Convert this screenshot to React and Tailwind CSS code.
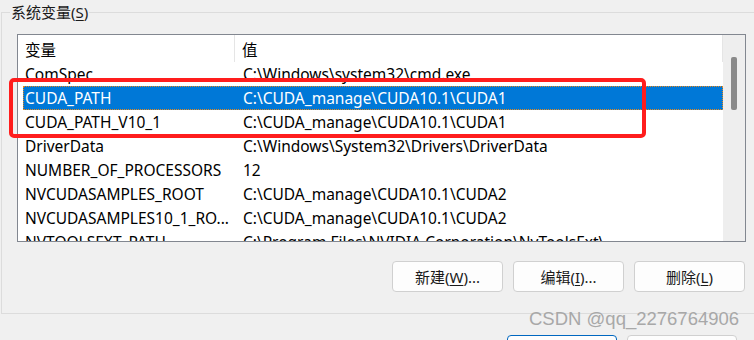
const rows = [
  ["ComSpec", "C:\\Windows\\system32\\cmd.exe"],
  ["CUDA_PATH", "C:\\CUDA_manage\\CUDA10.1\\CUDA1"],
  ["CUDA_PATH_V10_1", "C:\\CUDA_manage\\CUDA10.1\\CUDA1"],
  ["DriverData", "C:\\Windows\\System32\\Drivers\\DriverData"],
  ["NUMBER_OF_PROCESSORS", "12"],
  ["NVCUDASAMPLES_ROOT", "C:\\CUDA_manage\\CUDA10.1\\CUDA2"],
  ["NVCUDASAMPLES10_1_RO...", "C:\\CUDA_manage\\CUDA10.1\\CUDA2"],
  ["NVTOOLSEXT_PATH", "C:\\Program Files\\NVIDIA Corporation\\NvToolsExt\\"],
];

const selectedIndex = 1;

const WinButton = ({ label, hotkey, suffix = "", primary = false }) => (
  <button
    className={`w-[111px] h-[31px] shrink-0 rounded-[4px] border bg-[#fdfdfd] text-[15px] leading-[20px] text-[#1a1a1a] ${
      primary ? "border-[#0067c0]" : "border-[#d0d0d0]"
    }`}
  >
    {label}(<span className="underline underline-offset-2">{hotkey}</span>){suffix}
  </button>
);

const App = () => {
  return (
    <div className="relative w-[754px] h-[340px] overflow-hidden bg-[#f0f0f0] font-['Noto_Sans','Noto_Sans_CJK_SC',sans-serif] text-black">
      {/* group box */}
      <fieldset className="mt-[2px] ml-[1px] w-[790px] border border-[#dcdcdc] pb-[21px]">
        <legend className="ml-[8px] px-[1px] text-[15px] leading-[20px] text-[#1a1a1a]">
          系统变量(<span className="underline underline-offset-2">S</span>)
        </legend>

        {/* list view */}
        <div className="mt-[12px] ml-[15px] w-[729px] h-[208px] border border-[#828790] bg-white flex">
          <div className="w-[705px] h-full overflow-hidden text-[15.5px]">
            <div className="flex h-[27px] pt-[4px] leading-[22px]">
              <div className="w-[217px] pl-[7px] border-r border-[#e5e5e5] -mt-[4px] pt-[4px]">变量</div>
              <div className="flex-1 pl-[7px] border-r border-[#e5e5e5] -mt-[4px] pt-[4px]">值</div>
            </div>
            {rows.map(([name, value], i) => (
              <div
                key={name}
                className={`ml-[5px] flex h-[24px] leading-[22px] whitespace-nowrap border border-dotted ${
                  i === selectedIndex
                    ? "bg-[#0078d7] text-white border-[#e8891c]"
                    : "border-transparent"
                }`}
              >
                <div className="w-[212px] pl-[1px] overflow-hidden">{name}</div>
                <div className="flex-1 pl-[7px] overflow-hidden">{value}</div>
              </div>
            ))}
          </div>
          {/* scrollbar */}
          <div className="flex-1 bg-[#eeeeee] pt-[22px] pl-[8px]">
            <div className="w-[6px] h-[53px] rounded-[2px] bg-[#8a8a8a]" />
          </div>
        </div>

        <div className="mt-[19px] ml-[15px] w-[729px] pr-[1px] flex justify-end gap-[10px]">
          <WinButton label="新建" hotkey="W" suffix="..." />
          <WinButton label="编辑" hotkey="I" suffix="..." />
          <WinButton label="删除" hotkey="L" />
        </div>
      </fieldset>

      {/* dialog buttons, cut off */}
      <div className="mt-[21px] pr-[17px] flex justify-end gap-[10px]">
        <div className="w-[110px] h-[31px] rounded-[4px] border border-[#0067c0] bg-[#fdfdfd]" />
        <div className="w-[110px] h-[31px] rounded-[4px] border border-[#d0d0d0] bg-[#fdfdfd]" />
      </div>

      {/* red annotation */}
      <div className="absolute left-[9px] top-[78px] w-[637px] h-[60px] rounded-[5px] border-[4px] border-[#ff1d1d]" />

      {/* watermark */}
      <div className="absolute left-[529px] top-[308px] text-[18.5px] leading-[22px] font-['Liberation_Sans',sans-serif] text-[#a8a8a8]">
        CSDN @qq_2276764906
      </div>
    </div>
  );
};

export default App;
